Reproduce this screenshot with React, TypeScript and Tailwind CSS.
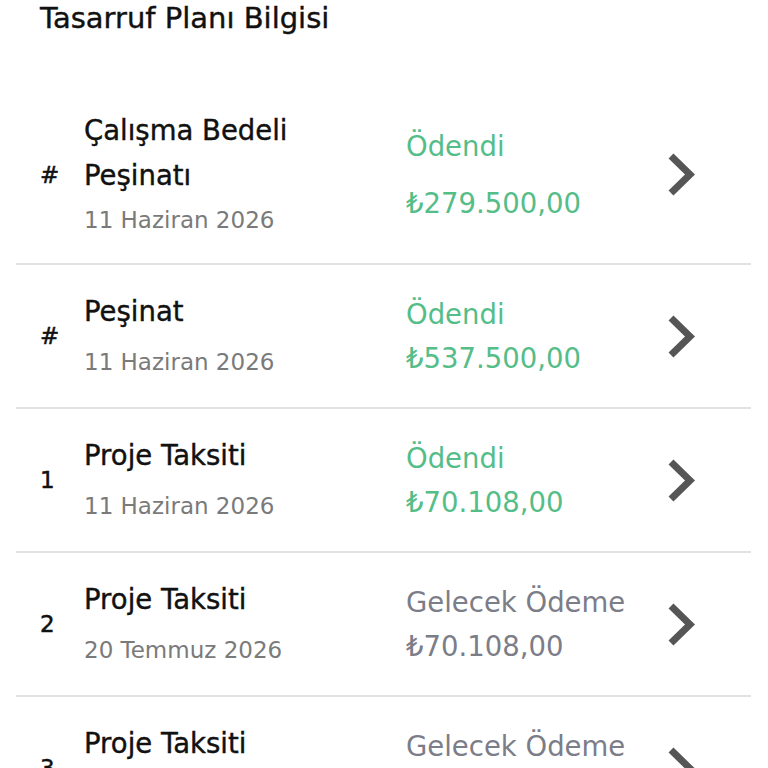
import React from "react";

interface Installment {
  no: string;
  title: string[];
  date: string;
  paid: boolean;
  amount: string;
}

const items: Installment[] = [
  { no: "#", title: ["Çalışma Bedeli", "Peşinatı"], date: "11 Haziran 2026", paid: true, amount: "₺279.500,00" },
  { no: "#", title: ["Peşinat"], date: "11 Haziran 2026", paid: true, amount: "₺537.500,00" },
  { no: "1", title: ["Proje Taksiti"], date: "11 Haziran 2026", paid: true, amount: "₺70.108,00" },
  { no: "2", title: ["Proje Taksiti"], date: "20 Temmuz 2026", paid: false, amount: "₺70.108,00" },
  { no: "3", title: ["Proje Taksiti"], date: "20 Ağustos 2026", paid: false, amount: "₺70.108,00" },
];

function Chevron() {
  return (
    <svg width="27" height="43" viewBox="0 0 27 43" fill="none">
      <polyline
        points="3,3 22,21.5 3,40"
        stroke="#565656"
        strokeWidth="7"
        strokeLinecap="butt"
        strokeLinejoin="miter"
      />
    </svg>
  );
}

function Row({ item, first }: { item: Installment; first: boolean }) {
  const color = item.paid ? "text-[#55bd88]" : "text-[#7b7d88]";
  return (
    <div className={`flex items-center pl-[24px] ${first ? "h-[177px]" : "h-[142px]"}`}>
      <div className="w-[44px] text-[23px] leading-[30px] text-[#111] [-webkit-text-stroke:0.5px_#111]">
        {item.no}
      </div>

      {/* Başlık ve tarih */}
      <div className={`w-[322px] flex flex-col ${first ? "" : "gap-[6px]"}`}>
        <div className="text-[27.5px] leading-[45px] text-[#111] [-webkit-text-stroke:0.4px_#111]">
          {item.title.map((t) => (
            <div key={t}>{t}</div>
          ))}
        </div>
        <div className="text-[23px] leading-[44px] text-[#7a7a7a]">{item.date}</div>
      </div>

      {/* Durum ve tutar */}
      <div
        className={`w-[262px] flex flex-col text-[27.5px] leading-[44px] ${color} ${
          first ? "gap-[13px]" : ""
        }`}
      >
        <div>{item.paid ? "Ödendi" : "Gelecek Ödeme"}</div>
        <div>{item.amount}</div>
      </div>

      <Chevron />
    </div>
  );
}

export default function App() {
  return (
    <div className="w-full h-[768px] overflow-hidden bg-white font-['DejaVu_Sans',sans-serif]">
      <div className="h-[86px] pl-[40px]">
        <h1 className="text-[29px] leading-[36px] text-[#111] [-webkit-text-stroke:0.4px_#111]">
          Tasarruf Planı Bilgisi
        </h1>
      </div>

      <div className="ml-[16px] w-[735px]">
        {items.map((item, i) => (
          <div key={i}>
            {i > 0 && <div className="h-[2px] bg-[#e2e2e2]" />}
            <Row item={item} first={i === 0} />
          </div>
        ))}
      </div>
    </div>
  );
}
